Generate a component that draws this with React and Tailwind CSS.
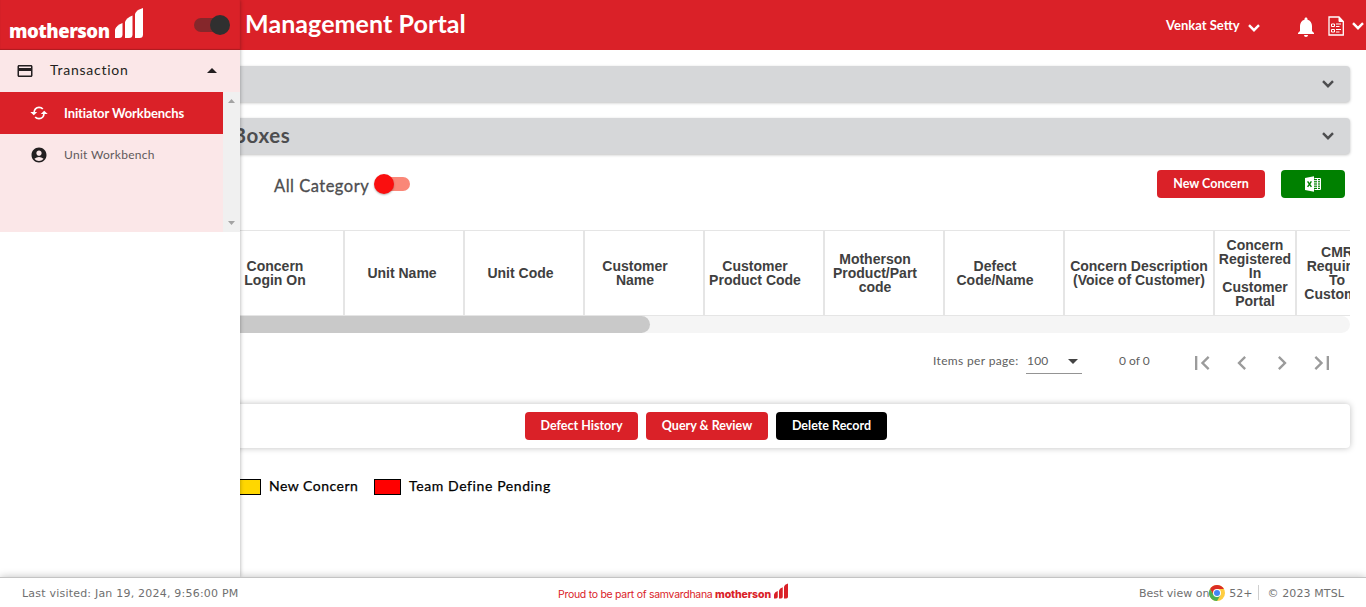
import React from "react";
import { MdNotifications, MdPayment, MdAccountCircle, MdArrowDropUp, MdArrowDropDown } from "react-icons/md";

const columns = [
  { lines: [""], box: "w-[89px]" },
  { lines: ["Concern", "No"], box: "w-[120px] pr-[18px]" },
  { lines: ["Concern", "Login On"], box: "w-[120px] pr-[18px]" },
  { lines: ["Unit Name"], box: "w-[120px] pr-[4px]" },
  { lines: ["Unit Code"], box: "w-[120px] pr-[7px]" },
  { lines: ["Customer", "Name"], box: "w-[120px] pr-[18px]" },
  { lines: ["Customer", "Product Code"], box: "w-[120px] pr-[18px]" },
  { lines: ["Motherson", "Product/Part", "code"], box: "w-[120px] pr-[18px]" },
  { lines: ["Defect", "Code/Name"], box: "w-[120px] pr-[18px]" },
  { lines: ["Concern Description", "(Voice of Customer)"], box: "w-[150px]" },
  { lines: ["Concern", "Registered", "In", "Customer", "Portal"], box: "w-[82px]" },
  { lines: ["CMR", "Required", "To", "Customer"], box: "w-[82px]" },
];

function Bars({ className }) {
  return (
    <svg viewBox="0 0 28 30" className={className} fill="currentColor" aria-hidden="true">
      <path d="M0 30V21.5Q1.5 17 7.500 15V26.5Q7.500 30 4 30Z" />
      <path d="M10 30V14Q11.500 9.500 17.500 7.500V26.500Q17.500 30 14 30Z" />
      <path d="M20 30V6Q21 2 28 0V26.500Q28 30 24.500 30Z" />
    </svg>
  );
}

function Chevron({ className, strokeWidth = 2.4 }) {
  return (
    <svg viewBox="0 0 12 8" className={className} fill="none" stroke="currentColor" strokeWidth={strokeWidth} aria-hidden="true">
      <path d="M1 1.200 6 6.200 11 1.200" />
    </svg>
  );
}

function PageIcon({ d }) {
  return (
    <span className="flex h-10 w-10 items-center justify-center text-[#9b9b9b]">
      <svg viewBox="0 0 24 24" className="h-7 w-7" fill="currentColor"><path d={d} /></svg>
    </span>
  );
}

function Sidebar() {
  return (
    <aside className="absolute left-0 top-0 z-20 flex h-[577px] w-60 flex-col bg-white shadow-[0_0_4px_rgba(0,0,0,0.35)]">
      <div className="flex h-[50px] shrink-0 items-start bg-[#da2128] pl-[9px] text-white shadow-[inset_0_-1px_1px_rgba(0,0,0,0.2)]">
        <span className="w-[106px] whitespace-nowrap pt-[19px] font-['Open_Sans',sans-serif] text-[18.500px] font-extrabold leading-6 tracking-[-0.5px]">motherson</span>
        <Bars className="mt-[8px] h-[30px] w-[28px]" />
        <span className="ml-[51px] mt-[15px] flex h-5 w-9 items-center">
          <span className="h-[14px] w-[26px] rounded-l-full bg-[#85272b]" />
          <span className="-ml-[10px] h-5 w-5 shrink-0 rounded-full bg-[#303030]" />
        </span>
      </div>
      <nav className="h-[182px] shrink-0 bg-[#fbe7e8] font-[Lato,sans-serif]">
        <div className="flex h-[42px] items-center pl-4 text-[#231f20]">
          <MdPayment className="h-[18px] w-[18px]" />
          <span className="ml-4 flex-1 whitespace-nowrap pb-[2px] text-[14px] leading-5 tracking-[0.75px]">Transaction</span>
          <MdArrowDropUp className="mr-[16px] h-6 w-6" />
        </div>
        <div className="flex h-[140px]">
          <div className="w-[223px]">
            <div className="flex h-[42px] items-center bg-[#da2128] pl-[30px] text-white">
              <svg viewBox="0 0 18 14" className="h-[14px] w-[18px]" fill="none" stroke="currentColor" strokeWidth="1.700">
                <path d="M4 7C4 3.500 6.200 1.300 9 1.300C10.700 1.300 12 2 12.800 3M14 7C14 10.500 11.800 12.700 9 12.700C7.300 12.700 6 12 5.200 11" />
                <path fill="currentColor" stroke="none" d="M.3 6H7.200L3.800 9.300ZM10.800 8H17.700L14.200 4.700Z" />
              </svg>
              <span className="ml-4 whitespace-nowrap text-[13px] font-bold leading-5 tracking-[-0.1px]">Initiator Workbenchs</span>
            </div>
            <div className="flex h-[42px] items-center pl-[30px] text-[#231f20]">
              <MdAccountCircle className="h-[18px] w-[18px]" />
              <span className="ml-4 whitespace-nowrap text-[12px] leading-5 tracking-[0.3px] text-[#5f595b]">Unit Workbench</span>
            </div>
          </div>
          <div className="flex w-[17px] flex-col items-center justify-between bg-[#f0f0f0] py-[7px] text-[#a3a3a3]">
            <svg viewBox="0 0 7 4" className="h-1 w-[7px]" fill="currentColor"><path d="M0 4 3.500 0 7 4Z" /></svg>
            <svg viewBox="0 0 7 4" className="h-1 w-[7px]" fill="currentColor"><path d="M0 0 3.500 4 7 0Z" /></svg>
          </div>
        </div>
      </nav>
    </aside>
  );
}

function Header() {
  return (
    <header className="flex h-[50px] shrink-0 items-start bg-[#da2128] pl-[245px] font-[Lato,sans-serif] text-white">
      <h1 className="whitespace-nowrap pt-[7px] text-[25px] font-bold leading-8 tracking-[0.08px]">Management Portal</h1>
      <div className="ml-auto flex h-[50px] items-center">
        <span className="w-[82px] whitespace-nowrap text-[13px] font-bold leading-5">Venkat Setty</span>
        <Chevron className="mt-[6px] h-2 w-3" />
        <MdNotifications className="ml-[34px] mt-[3px] h-6 w-6" />
        <svg viewBox="0 0 16 20" className="ml-[10px] mt-[2px] h-5 w-4" fill="none" stroke="currentColor">
          <path d="M1 1H11L15.300 5.500V19H1Z" strokeWidth="1.300" />
          <path d="M11 1V5.500H15.300Z" fill="currentColor" />
          <path d="M3.500 8H6.500V10.500H3.500ZM3.500 13.500H6.500V16H3.500ZM8 8H13M8 10.500H11.500M8 13.500H13M8 16H11.500" />
        </svg>
        <Chevron className="ml-2 mr-[2px] mt-[2px] h-2 w-3" />
      </div>
    </header>
  );
}

function Panel({ children }) {
  return (
    <div className="flex h-9 shrink-0 items-center justify-between rounded-[4px] bg-[#d6d7d9] pr-4 text-[#4d4d4f] shadow-[0_1px_3px_rgba(0,0,0,0.25)]">
      <span className="whitespace-nowrap pb-[2px] pl-[146px] text-[20.500px] font-bold leading-6 tracking-[0.6px]">{children}</span>
      <Chevron className="h-2 w-3" />
    </div>
  );
}

export default function App() {
  return (
    <div className="relative flex h-[607px] w-[1366px] flex-col overflow-hidden bg-white">
      <Sidebar />
      <Header />
      <main className="flex h-[527px] flex-col px-4 pt-4 font-[Lato,sans-serif]">
        <div className="flex flex-col gap-4">
          <Panel />
          <Panel>Search Boxes</Panel>
        </div>

        <div className="mt-4 flex h-7 items-center pl-[258px] pr-[5px]">
          <span className="w-[100px] whitespace-nowrap pt-[3px] text-[16.500px] leading-6 tracking-[0.5px] text-[#4d4d4f] [-webkit-text-stroke:0.3px]">All Category</span>
          <span className="flex items-center">
            <span className="z-10 h-5 w-5 rounded-full bg-[#fa0f0f] shadow-[0_1px_2px_rgba(0,0,0,0.3)]" />
            <span className="-ml-[10px] h-[14px] w-[26px] rounded-r-full bg-[#fa8778]" />
          </span>
          <button className="ml-auto h-7 w-[108px] whitespace-nowrap rounded-[4px] bg-[#da2128] text-[12.500px] font-bold text-white">New Concern</button>
          <button className="ml-4 flex h-7 w-16 items-center justify-center rounded-[4px] bg-[#008000] text-white">
            <svg viewBox="0 0 16 16" className="h-4 w-4">
              <path fill="currentColor" d="M0 2 9 .3V15.700L0 14Z" />
              <path fill="none" stroke="currentColor" d="M9.500 2.500H15.500V13.500H9.500M9 4.700H15M9 6.900H15M9 9.100H15M9 11.300H15M12.500 2.500V13.500" />
              <path fill="none" stroke="#008000" strokeWidth="1.400" d="M2.600 5.300 6.400 10.900M6.400 5.300 2.600 10.900" />
            </svg>
          </button>
        </div>

        <div className="mt-8 flex h-[86px] shrink-0 overflow-hidden border-y border-[#e5e5e5] font-['Liberation_Sans',sans-serif] text-[14px] font-bold leading-[14px] text-[#404040]">
          {columns.map((c, i) => (
            <div key={i} className={"flex shrink-0 flex-col items-center justify-center whitespace-nowrap border-r-2 border-[#e5e5e5] " + c.box}>
              {c.lines.map((l) => <span key={l}>{l}</span>)}
            </div>
          ))}
        </div>
        <div className="h-[17px] shrink-0 overflow-hidden rounded-full bg-[#f5f5f5]">
          <div className="h-full w-[634px] rounded-full bg-[#c9c9c9]" />
        </div>

        <div className="flex h-[71px] shrink-0 items-center justify-end text-[12px] text-[#606060]">
          <span className="w-[93px] whitespace-nowrap pb-[16px] leading-4 tracking-[0.35px]">Items per page:</span>
          <span className="mb-[12px] flex h-[22px] w-14 items-start justify-between border-b border-[#949494]">
            <span className="pl-px pt-px leading-4 tracking-[0.2px]">100</span>
            <MdArrowDropDown className="-mr-[3px] -mt-[3px] h-6 w-6 text-[#444]" />
          </span>
          <span className="ml-[37px] w-[63px] whitespace-nowrap pb-[16px] leading-4">0 of 0</span>
          <div className="mb-[11px] mr-2 flex">
            <PageIcon d="M18.410 16.590L13.820 12l4.590-4.590L17 6l-6 6 6 6zM6 6h2v12H6z" />
            <PageIcon d="M15.410 7.410L14 6l-6 6 6 6 1.410-1.410L10.830 12z" />
            <PageIcon d="M10 6L8.590 7.410 13.170 12l-4.580 4.590L10 18l6-6z" />
            <PageIcon d="M5.590 7.410L10.180 12l-4.590 4.590L7 18l6-6-6-6zM16 6h2v12h-2z" />
          </div>
        </div>

        <div className="flex h-11 shrink-0 items-center gap-2 rounded-[4px] pl-[509px] text-[12.500px] font-bold text-white shadow-[0_0_6px_rgba(0,0,0,0.25)]">
          <button className="h-7 w-[113px] whitespace-nowrap rounded-[4px] bg-[#da2128]">Defect History</button>
          <button className="h-7 w-[122px] whitespace-nowrap rounded-[4px] bg-[#da2128]">Query &amp; Review</button>
          <button className="h-7 w-[111px] whitespace-nowrap rounded-[4px] bg-black">Delete Record</button>
        </div>

        <div className="mt-[28px] flex h-5 items-center pl-[218px] text-[14px] text-black [-webkit-text-stroke:0.25px]">
          <span className="mt-px h-4 w-[27px] border border-black bg-[#ffd700]" />
          <span className="ml-2 w-[105px] whitespace-nowrap pb-[2px] tracking-[0.5px]">New Concern</span>
          <span className="mt-px h-4 w-[27px] border border-black bg-[#ff0000]" />
          <span className="ml-2 whitespace-nowrap pb-[2px] tracking-[0.6px]">Team Define Pending</span>
        </div>
      </main>

      <footer className="z-30 flex h-[30px] shrink-0 items-center border-t border-[#c4c4c4] bg-white pl-[22px] pr-[22px] font-['DejaVu_Sans',sans-serif] text-[11px] text-[#6f6f6f] shadow-[0_0_8px_rgba(0,0,0,0.25)]">
        <span className="w-[536px] whitespace-nowrap pt-[3px] tracking-[0.21px]">Last visited: Jan 19, 2024, 9:56:00 PM</span>
        <span className="flex items-center whitespace-nowrap font-[Inter,sans-serif] text-[10.500px] text-[#da2128]">
          <span className="w-[157px] pt-[5px] tracking-[-0.28px]">Proud to be part of samvardhana</span>
          <span className="w-[59px] pt-[5px] font-extrabold tracking-[-0.1px]">motherson</span>
          <Bars className="mb-[3px] h-4 w-[14px]" />
        </span>
        <span className="ml-auto whitespace-nowrap pt-[3px]">Best view on</span>
        <svg viewBox="0 0 16 16" className="mt-px h-4 w-4">
          <circle cx="8" cy="8" r="8" fill="#ffcd40" />
          <path d="M1.100 4A8 8 0 0 1 14.930 4H8L4.540 10Z" fill="#db2d25" />
          <path d="M1.070 4A8 8 0 0 0 8 16L11.500 10H4.540Z" fill="#4caf50" />
          <circle cx="8" cy="8" r="4" fill="#fff" />
          <circle cx="8" cy="8" r="3" fill="#4285f4" />
        </svg>
        <span className="ml-1 whitespace-nowrap pt-[3px]">52+</span>
        <span className="ml-[5px] mr-[9px] h-[15px] w-px bg-[#cfcfcf]" />
        <span className="whitespace-nowrap pt-[3px] tracking-[0.1px]">© 2023 MTSL</span>
      </footer>
    </div>
  );
}
